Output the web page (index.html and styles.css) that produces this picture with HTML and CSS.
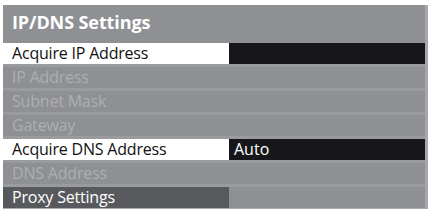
FILE: index.html
```html
<!DOCTYPE html>
<html lang="en">
<head>
  <meta charset="UTF-8">
  <title>IP/DNS Settings</title>
  <link rel="stylesheet" href="styles.css">
</head>
<body>
  <div class="panel">
    <h2 class="title">IP/DNS Settings</h2>
    <div class="rows">
      <div class="row selected">
        <div class="label">Acquire IP Address</div>
        <div class="value"></div>
      </div>
      <div class="row disabled">
        <div class="label">IP Address</div>
        <div class="value ip"><span>.</span><span></span><span>.</span></div>
      </div>
      <div class="row disabled">
        <div class="label">Subnet Mask</div>
        <div class="value ip"><span>.</span><span>.</span><span>.</span></div>
      </div>
      <div class="row disabled">
        <div class="label">Gateway</div>
        <div class="value ip"><span>.</span><span>.</span><span>.</span></div>
      </div>
      <div class="row selected">
        <div class="label">Acquire DNS Address</div>
        <div class="value">Auto</div>
      </div>
      <div class="row disabled">
        <div class="label">DNS Address</div>
        <div class="value ip"><span>.</span><span></span><span>.</span></div>
      </div>
      <div class="row dark">
        <div class="label">Proxy Settings</div>
        <div class="value"></div>
      </div>
    </div>
  </div>
</body>
</html>
```

FILE: styles.css
```css
body { margin: 0; background: #fff; font-family: "Open Sans", "Liberation Sans", sans-serif; }
.panel { margin: 5px 0 0 3px; width: 425px; height: 204px; background: #8e9093; border-right: 3px solid #a4a6a8; box-sizing: border-box; border-bottom: 1px solid #a9abad; }
.title { margin: 0; height: 38px; padding: 5px 0 0 9px; box-sizing: border-box; font-size: 18px; font-weight: bold; color: #fff; letter-spacing: -0.1px; }
.rows { display: flex; flex-direction: column; gap: 3px; background: #999b9d; }
.row { display: flex; height: 21px; font-size: 16px; line-height: 20px; }
.label { width: 226px; padding-left: 9px; box-sizing: border-box; letter-spacing: -0.2px; background: #8e9093; }
.value { flex: 1; padding-left: 5px; background: #8e9093; }
.selected .label { background: #fff; color: #111; }
.selected .value { background: #17161b; color: #fff; }
.disabled .label { color: #adafb1; }
.dark .label { background: #58595c; color: #fff; }
.ip { display: flex; padding-left: 36px; color: #a5a7a9; font-size: 12px; }
.ip span { width: 40px; }
```
